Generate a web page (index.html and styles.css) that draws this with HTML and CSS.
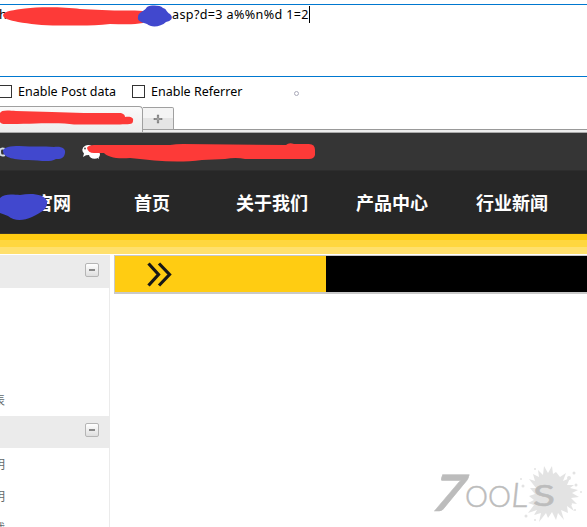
FILE: index.html
```html
<!DOCTYPE html>
<html lang="zh-CN">
<head>
<meta charset="utf-8">
<title>官网</title>
<link rel="stylesheet" href="styles.css">
</head>
<body>
<section class="request">
  <div class="url"><span class="lead">h</span><span class="query">asp?d=3 a%%n%d 1=2</span><i class="caret"></i></div>
  <div class="options">
    <label class="option"><i class="box"></i><span>Enable Post data</span></label>
    <label class="option"><i class="box"></i><span>Enable Referrer</span></label>
    <i class="handle"></i>
  </div>
</section>
<div class="tabs">
  <div class="tab"></div>
  <div class="new-tab"><svg width="10" height="10" viewBox="0 0 10 10"><path d="M5 .7v8.6M.7 5h8.6" stroke="#777" stroke-width="2.2"/><path d="M5 1.500v7M1.500 5h7" stroke="#ccc" stroke-width=".6"/></svg></div>
</div>
<header class="contact">
  <svg class="badge" width="6" height="14" viewBox="0 0 6 14"><path d="M5 4Q0 2 0 7T5 10" fill="none" stroke="#d5dde2" stroke-width="2"/></svg>
  <svg class="chat" width="22" height="18" viewBox="0 0 22 18"><path d="M2 14l1-3.500A6 5 0 1 1 8 12l-3 .2z" fill="#fff"/><ellipse cx="13.500" cy="11.500" rx="5.500" ry="4.300" fill="#fff"/><path d="M15 14l3 2-1-4z" fill="#fff"/><circle cx="4" cy="5.500" r=".9" fill="#444"/></svg>
</header>
<nav class="nav">
  <strong class="brand">官网</strong>
  <ul class="links"><li>首页</li><li>关于我们</li><li>产品中心</li><li>行业新闻</li></ul>
</nav>
<div class="stripes"></div>
<div class="content">
  <aside class="side">
    <div class="side-head"><i class="collapse"></i></div>
    <div class="side-list first"><span>表</span></div>
    <div class="side-head"><i class="collapse"></i></div>
    <div class="side-list"><span>明</span><span>明</span><span>载</span></div>
  </aside>
  <main class="main">
    <div class="banner"><div class="banner-title"><svg width="28" height="26" viewBox="0 0 28 26"><path d="M1.500 1.500L11.500 12.500 1.500 23.500M12 1.500L22.500 12.500 12 23.500" fill="none" stroke="#171717" stroke-width="3.200"/></svg></div></div>
  </main>
</div>
<svg class="marks" width="587" height="230" viewBox="0 0 587 230">
  <g fill="#fd3a38">
    <path d="M3 15C4 11 14 10 25 8.500C40 6.500 65 7 80 9L102 10C119 11 133 10 143 11V23C133 25 121 24 110 24C95 26 79 25.500 65 25.500C45 26 31 24 18 22C10 20 3 19 3 15Z"/>
    <path d="M0 113C1 110 7 110 16 111L52 112L84 113L119 113C123 113 125 115 125 117C131 116 134 118 133 121C133 125 128 124 120 124.500L74 124.500C60 122 32 124 5 124Q1 124 0 122Z"/>
    <path d="M87 148C88 144 96 145 112 145L170 145Q176 144 183 144L286 145Q289 142 294 144H309Q315 144 315 150V155Q314 159 309 159H245Q236 157 225 159L202 160C178 163 156 161 130 158C115 159 108 157 104 153H94Q88 153 87 148Z"/>
  </g>
  <g fill="#4148ce">
    <path d="M138 17C138 12 144 12 147 7C151 5 160 5 163 8C167 9 166 12 170 14C174 18 171 21 166 22C161 27 151 28 147 24C141 22 137 21 138 17Z"/>
    <path d="M3 151C3 147 11 146 19 146C34 147 43 146 54 147C62 146 66 149 65 153C64 159 60 159 56 159C49 163 39 160 28 160C16 160 3 158 3 151Z"/>
    <path d="M0 198C5 193 14 195 20 195C32 193 44 194 47 201C48 209 42 212 32 217C23 221 14 221 8 216Q3 214 0 213Z"/>
  </g>
</svg>
<svg class="watermark" width="167" height="72" viewBox="0 0 167 72">
  <path fill="#e3e3e3" d="M109 24l6 2-2-7 6 3-1-7 5 5 1-9 4 7 4-7 1 8 3-2 4 5 6-4-3 8 7-3-3 7 7 0-4 3 8 2-6 3 7 4-8 1 6 6-7-1 4 8-7-5 1 7-7-3 3 10-6-7-2 7-4-8-4 6-2-5-7 9 2-9-7 2 3-5-9 3 6-8-6-2 6-3-5-4 6-2-5-6 6 0z"/>
  <g fill="#e3e3e3"><circle cx="115" cy="14" r="1"/><circle cx="154" cy="18" r="1.500"/><circle cx="156" cy="30" r="1.500"/><circle cx="161" cy="37" r="1"/><circle cx="149" cy="23" r="2"/><circle cx="155" cy="55" r="1"/><circle cx="150" cy="49" r="2"/><circle cx="106" cy="61" r="1.500"/><circle cx="115" cy="65" r="1"/><circle cx="101" cy="24" r="1"/><circle cx="103" cy="31" r="1.500"/></g>
  <g class="word">
    <text class="seven" transform="translate(9 56) skewX(-17)" textLength="31" lengthAdjust="spacingAndGlyphs">7</text>
    <text x="45" y="52" textLength="46" lengthAdjust="spacingAndGlyphs">OO</text>
    <text transform="translate(90 52) skewX(-6)" textLength="17" lengthAdjust="spacingAndGlyphs" class="tall">L</text>
    <text x="113" y="51" textLength="22" lengthAdjust="spacingAndGlyphs" class="ess">S</text>
  </g>
</svg>
</body>
</html>
```
FILE: styles.css
```css
* { box-sizing: border-box; }
body { margin: 0; width: 587px; height: 527px; overflow: hidden; position: relative; background: #fff; color: #000; font: 13px/18px "Open Sans", "Noto Sans CJK SC", sans-serif; }
i { display: block; flex: none; }
.request { height: 106px; padding-top: 4px; }
.url { height: 73px; border: solid #0078d0; border-width: 1px 0; display: flex; align-items: flex-start; }
.lead { width: 172px; }
.lead, .query { line-height: 19px; white-space: pre; font-family: "Noto Sans", sans-serif; }
.lead { margin-left: -1px; }
.query { width: 138px; margin-left: 1px; font-size: 12.600px; letter-spacing: .35px; }
.caret { width: 1px; height: 17px; margin: 1px 0 0 -1px; background: #000; }
.options { display: flex; height: 29px; padding-top: 6px; font-family: "Noto Sans", sans-serif; font-size: 12.500px; }
.option { display: flex; width: 133px; margin-left: -1px; white-space: nowrap; }
.option + .option { width: 162px; margin-left: 0; }
.box { width: 13px; height: 13px; border: 1px solid #333; margin: 2px 6px 0 0; }
.handle { width: 5px; height: 5px; border: 1px solid #aaaaba; border-radius: 50%; margin-top: 8px; }
.tabs { height: 27px; display: flex; align-items: flex-start; background: linear-gradient(#fff 23px, #999 23px 24px, #ededed 24px 26px, #aaa 26px); }
.tab { width: 143px; height: 26px; border: solid #a0a0a0; border-width: 1px 1px 0 0; border-radius: 0 4px 0 0; background: linear-gradient(#fafafa, #ededed); }
.new-tab { width: 31px; height: 23px; margin-top: 1px; border: 1px solid #a0a0a0; border-left: 0; border-radius: 0 2px 0 0; display: grid; place-items: center; background: linear-gradient(#f4f4f4 50%, #e5e5e5 50%); }
.contact { height: 38px; display: flex; gap: 75px; background: #353535; padding: 10px 0 0; border-bottom: 1px solid #2d2d2d; }
.badge { margin-top: 2px; }
.nav { height: 63px; background: #272727; border-bottom: 1px solid #3b3728; color: #fff; display: flex; align-items: center; padding: 0 0 1px 35px; }
.brand { width: 99px; font: bold 18px/26px "Noto Sans CJK SC", sans-serif; }
.links { display: flex; gap: 48px; list-style: none; margin: 0; padding: 0; font: bold 18px/26px "Noto Sans CJK SC", sans-serif; white-space: nowrap; }
.links li:first-child { margin-right: 18px; }
.stripes { height: 21px; background: linear-gradient(#ffcc12 6px, #ffd73f 6px 13px, #ffe06d 13px 20px, #fff 20px); }
.content { display: flex; height: 272px; }
.side { width: 110px; border-right: 1px solid #ebebeb; overflow: hidden; }
.side-head { height: 32px; background: #ebebeb; display: flex; justify-content: flex-end; padding: 7px 10px 0 0; }
.side-head:first-child { height: 33px; padding-top: 8px; }
.collapse { width: 14px; height: 14px; border: 1px solid #b5b5b5; border-radius: 2px; background: linear-gradient(#888, #888) center / 6px 2px no-repeat, linear-gradient(#fff, #dedede); }
.side-list { display: flex; flex-direction: column; font: 12px/32px "Noto Sans CJK SC", sans-serif; color: #626a6b; margin-left: -7px; }
.first { height: 128px; padding-top: 96px; }
.main { flex: 1; padding-left: 4px; }
.banner { height: 39px; border: solid #c9c9c9; border-width: 1px 0 2px 1px; background: #000; }
.banner-title { width: 211px; height: 36px; background: #ffcc12; padding: 6px 0 0 32px; }
.marks { position: absolute; left: 0; top: 0; }
.watermark { position: absolute; left: 420px; top: 455px; }
.word { fill: #bcbcbc; stroke: #bcbcbc; stroke-width: .5px; font: 300 29px Lato, sans-serif; }
.seven { font-size: 50px; font-weight: 700; }
.tall { font-size: 34px; }
.ess { font-size: 28px; font-weight: 400; }
```
